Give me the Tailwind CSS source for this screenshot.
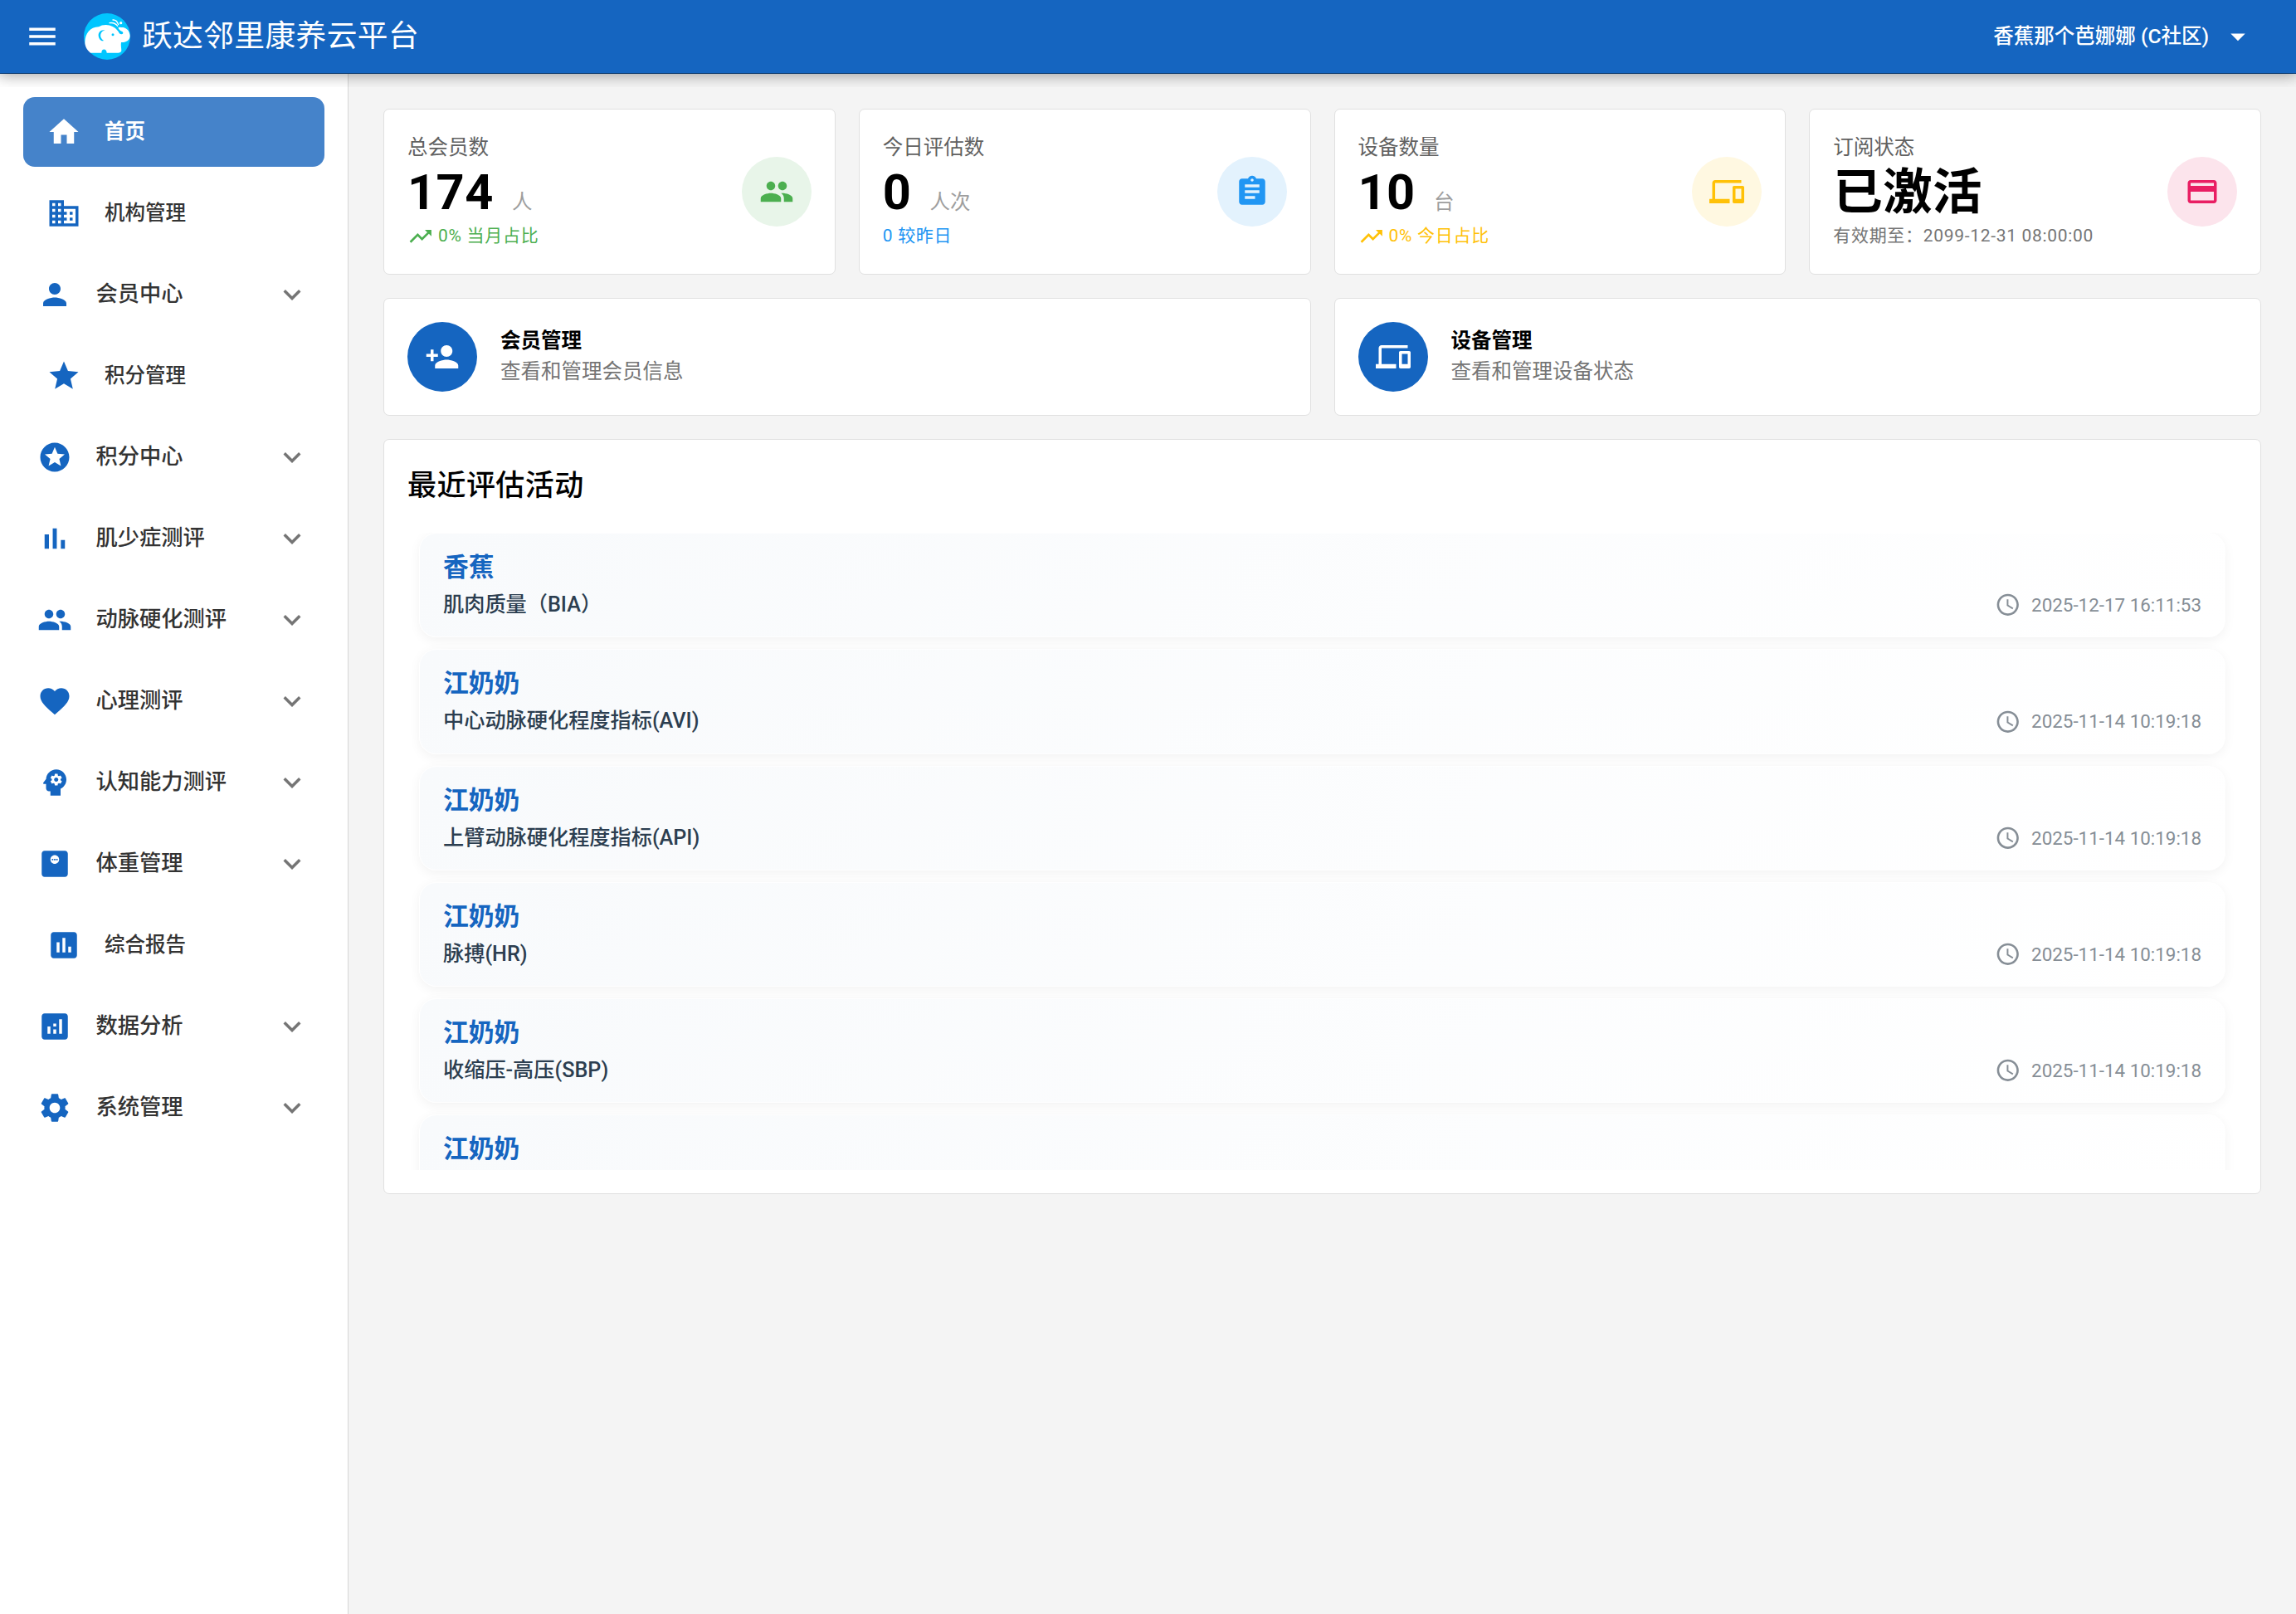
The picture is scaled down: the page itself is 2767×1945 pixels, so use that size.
<!DOCTYPE html>
<html lang="zh-CN">
<head>
  <meta charset="UTF-8" />
  <title>跃达邻里康养云平台</title>
  <script src="https://cdn.jsdelivr.net/npm/@tailwindcss/browser@4"></script>
  <style>
    body {
      font-family: Roboto, 'Noto Sans CJK SC', sans-serif;
    }
  </style>
</head>
<body class="h-[1945px] bg-[#f4f4f4] text-black overflow-hidden flex flex-col">

  <!-- Icon sprite -->
  <svg class="hidden" xmlns="http://www.w3.org/2000/svg">
    <symbol id="menu" viewBox="0 0 24 24"><path d="M3 18h18v-2H3v2zm0-5h18v-2H3v2zm0-7v2h18V6H3z"/></symbol>
    <symbol id="drop" viewBox="0 0 24 24"><path d="M7 10l5 5 5-5z"/></symbol>
    <symbol id="chevron" viewBox="0 0 24 24"><path d="M7.41 8.59L12 13.17l4.59-4.58L18 10l-6 6-6-6z"/></symbol>
    <symbol id="home" viewBox="0 0 24 24"><path d="M10 20v-6h4v6h5v-8h3L12 3 2 12h3v8z"/></symbol>
    <symbol id="business" viewBox="0 0 24 24"><path d="M12 7V3H2v18h20V7H12zM6 19H4v-2h2v2zm0-4H4v-2h2v2zm0-4H4V9h2v2zm0-4H4V5h2v2zm4 12H8v-2h2v2zm0-4H8v-2h2v2zm0-4H8V9h2v2zm0-4H8V5h2v2zm10 12h-8v-2h2v-2h-2v-2h2v-2h-2V9h8v10zm-2-8h-2v2h2v-2zm0 4h-2v2h2v-2z"/></symbol>
    <symbol id="person" viewBox="0 0 24 24"><path d="M12 12c2.21 0 4-1.79 4-4s-1.79-4-4-4-4 1.79-4 4 1.79 4 4 4zm0 2c-2.67 0-8 1.34-8 4v2h16v-2c0-2.66-5.33-4-8-4z"/></symbol>
    <symbol id="star" viewBox="0 0 24 24"><path d="M12 17.27L18.18 21l-1.64-7.03L22 9.24l-7.19-.61L12 2 9.19 8.63 2 9.24l5.46 4.73L5.82 21z"/></symbol>
    <symbol id="stars" viewBox="0 0 24 24"><path d="M11.99 2C6.47 2 2 6.48 2 12s4.47 10 9.99 10C17.52 22 22 17.52 22 12S17.52 2 11.99 2zm4.24 16L12 15.45 7.77 18l1.12-4.81-3.73-3.23 4.92-.42L12 5l1.92 4.53 4.92.42-3.73 3.23L16.23 18z"/></symbol>
    <symbol id="bar" viewBox="0 0 24 24"><path d="M5 9.2h3V19H5zM10.6 5h2.8v14h-2.8zm5.6 8H19v6h-2.8z"/></symbol>
    <symbol id="people" viewBox="0 0 24 24"><path d="M16 11c1.66 0 2.99-1.34 2.99-3S17.66 5 16 5c-1.66 0-3 1.34-3 3s1.34 3 3 3zm-8 0c1.66 0 2.99-1.34 2.99-3S9.66 5 8 5C6.34 5 5 6.34 5 8s1.34 3 3 3zm0 2c-2.33 0-7 1.17-7 3.5V19h14v-2.5c0-2.33-4.67-3.5-7-3.5zm8 0c-.29 0-.62.02-.97.05 1.16.84 1.97 1.97 1.97 3.45V19h6v-2.5c0-2.33-4.67-3.5-7-3.5z"/></symbol>
    <symbol id="heart" viewBox="0 0 24 24"><path d="M12 21.35l-1.45-1.32C5.4 15.36 2 12.28 2 8.5 2 5.42 4.42 3 7.5 3c1.74 0 3.41.81 4.5 2.09C13.09 3.81 14.76 3 16.5 3 19.58 3 22 5.42 22 8.5c0 3.78-3.4 6.86-8.55 11.54L12 21.35z"/></symbol>
    <symbol id="mind" viewBox="0 0 24 24"><path d="M13 8.57c-.79 0-1.43.64-1.43 1.43s.64 1.43 1.43 1.43 1.43-.64 1.43-1.43-.64-1.43-1.43-1.43z"/><path d="M13 3C9.25 3 6.2 5.94 6.02 9.64L4.1 12.2c-.25.33-.01.8.4.8H6v3c0 1.1.9 2 2 2h1v3h7v-4.68c2.36-1.12 4-3.53 4-6.32 0-3.87-3.13-7-7-7zm3 7c0 .13-.01.26-.02.39l.83.66c.08.06.1.16.05.25l-.8 1.39c-.05.09-.16.12-.24.09l-.99-.4c-.21.16-.43.29-.67.39L14 13.83c-.01.1-.1.17-.2.17h-1.6c-.1 0-.18-.07-.2-.17l-.15-1.06c-.25-.1-.47-.23-.68-.39l-.99.4c-.09.03-.2 0-.25-.09l-.8-1.39c-.05-.08-.03-.19.05-.25l.84-.66c-.01-.13-.02-.26-.02-.39s.02-.27.04-.39l-.85-.66c-.08-.06-.1-.16-.05-.26l.8-1.38c.05-.09.15-.12.24-.09l1 .4c.2-.15.43-.29.67-.39l.15-1.06c.02-.1.1-.17.2-.17h1.6c.1 0 .18.07.2.17l.15 1.06c.24.1.46.23.67.39l1-.4c.09-.03.2 0 .24.09l.8 1.38c.05.09.03.2-.05.26l-.85.66c.03.12.04.25.04.39z"/></symbol>
    <symbol id="weight" viewBox="0 0 24 24"><path d="M19 3H5c-1.1 0-2 .9-2 2v14c0 1.1.9 2 2 2h14c1.1 0 2-.9 2-2V5c0-1.1-.9-2-2-2zm-7 9c-1.66 0-3-1.34-3-3s1.34-3 3-3 3 1.34 3 3-1.34 3-3 3z"/><path d="M10 8.5h1v1h-1zM11.5 8.5h1v1h-1zM13 8.5h1v1h-1z"/></symbol>
    <symbol id="report" viewBox="0 0 24 24"><path d="M19 3H5c-1.1 0-2 .9-2 2v14c0 1.1.9 2 2 2h14c1.1 0 2-.9 2-2V5c0-1.1-.9-2-2-2zM9 17H7v-7h2v7zm4 0h-2V7h2v10zm4 0h-2v-4h2v4z"/></symbol>
    <symbol id="analytics" viewBox="0 0 24 24"><path d="M19 3H5c-1.1 0-2 .9-2 2v14c0 1.1.9 2 2 2h14c1.1 0 2-.9 2-2V5c0-1.1-.9-2-2-2zM9 17H7v-5h2v5zm4 0h-2v-3h2v3zm0-5h-2v-2h2v2zm4 5h-2V7h2v10z"/></symbol>
    <symbol id="settings" viewBox="0 0 24 24"><path d="M19.14 12.94c.04-.3.06-.61.06-.94 0-.32-.02-.64-.07-.94l2.03-1.58c.18-.14.23-.41.12-.61l-1.92-3.32c-.12-.22-.37-.29-.59-.22l-2.39.96c-.5-.38-1.03-.7-1.62-.94l-.36-2.54c-.04-.24-.24-.41-.48-.41h-3.84c-.24 0-.43.17-.47.41l-.36 2.54c-.59.24-1.13.57-1.62.94l-2.39-.96c-.22-.08-.47 0-.59.22L2.74 8.87c-.12.21-.08.47.12.61l2.03 1.58c-.05.3-.09.63-.09.94s.02.64.07.94l-2.03 1.58c-.18.14-.23.41-.12.61l1.92 3.32c.12.22.37.29.59.22l2.39-.96c.5.38 1.03.7 1.62.94l.36 2.54c.05.24.24.41.48.41h3.84c.24 0 .44-.17.47-.41l.36-2.54c.59-.24 1.13-.56 1.62-.94l2.39.96c.22.08.47 0 .59-.22l1.92-3.32c.12-.22.07-.47-.12-.61l-2.01-1.58zM12 15.6c-1.98 0-3.6-1.62-3.6-3.6s1.62-3.6 3.6-3.6 3.6 1.62 3.6 3.6-1.62 3.6-3.6 3.6z"/></symbol>
    <symbol id="trend" viewBox="0 0 24 24"><path d="M16 6l2.29 2.29-4.88 4.88-4-4L2 16.59 3.41 18l6-6 4 4 6.3-6.29L22 12V6z"/></symbol>
    <symbol id="assignment" viewBox="0 0 24 24"><path d="M19 3h-4.18C14.4 1.84 13.3 1 12 1c-1.3 0-2.4.84-2.82 2H5c-1.1 0-2 .9-2 2v14c0 1.1.9 2 2 2h14c1.1 0 2-.9 2-2V5c0-1.1-.9-2-2-2zm-7 0c.55 0 1 .45 1 1s-.45 1-1 1-1-.45-1-1 .45-1 1-1zm2 14H7v-2h7v2zm3-4H7v-2h10v2zm0-4H7V7h10v2z"/></symbol>
    <symbol id="devices" viewBox="0 0 24 24"><path d="M4 6h18V4H4c-1.1 0-2 .9-2 2v11H0v3h14v-3H4V6zm19 2h-6c-.55 0-1 .45-1 1v10c0 .55.45 1 1 1h6c.55 0 1-.45 1-1V9c0-.55-.45-1-1-1zm-1 9h-4v-7h4v7z"/></symbol>
    <symbol id="payment" viewBox="0 0 24 24"><path d="M20 4H4c-1.11 0-1.99.89-1.99 2L2 18c0 1.11.89 2 2 2h16c1.11 0 2-.89 2-2V6c0-1.11-.89-2-2-2zm0 14H4v-6h16v6zm0-10H4V6h16v2z"/></symbol>
    <symbol id="personadd" viewBox="0 0 24 24"><path d="M15 12c2.21 0 4-1.79 4-4s-1.79-4-4-4-4 1.79-4 4 1.79 4 4 4zm-9-2V7H4v3H1v2h3v3h2v-3h3v-2H6zm9 4c-2.67 0-8 1.34-8 4v2h16v-2c0-2.66-5.33-4-8-4z"/></symbol>
    <symbol id="clock" viewBox="0 0 24 24"><path d="M11.99 2C6.47 2 2 6.48 2 12s4.47 10 9.99 10C17.52 22 22 17.52 22 12S17.52 2 11.99 2zM12 20c-4.42 0-8-3.58-8-8s3.58-8 8-8 8 3.58 8 8-3.58 8-8 8z"/><path d="M12.5 7H11v6l5.25 3.15.75-1.23-4.5-2.67z"/></symbol>
  </svg>

  <!-- Header -->
  <header class="relative z-10 shrink-0 h-[89px] bg-[#1565c0] border-b border-[#114b8e] text-white flex items-center pl-[30px] pr-[49px]">
    <svg class="size-[42px] fill-current"><use href="#menu"/></svg>
    <svg class="size-14 ml-[29px]" viewBox="22 18 168 168">
      <circle cx="106" cy="102" r="84" fill="#00c6ff"/>
      <path fill="#fff" d="M26 122C27 92 44 68 76 67C88 58 112 57 126 66C136 70 142 78 147 84C149 90 153 94 158 94C164 94 166 89 162 85C156 82 148 78 146 70C152 66 158 70 164 69C178 71 188 84 189 99C189 115 176 124 157 123C155 134 158 146 158 154C157 159 152 161 146 161H105C105 144 85 144 86 161H46C34 150 26 138 26 122z"/>
      <path fill="#00c6ff" d="M99 79C82 76 74 88 75 99C76 112 86 121 94 117C84 110 81 103 83 94C85 86 91 81 99 79z"/>
      <circle cx="127" cy="95" r="4.500" fill="#00c6ff"/>
      <path fill="none" stroke="#fff" stroke-width="4" stroke-linecap="round" d="M115 53C127 51 138 56 144 64M127 42C137 41 144 50 147 59"/>
      <circle cx="156" cy="53" r="5" fill="#fff"/>
    </svg>
    <div class="ml-[14px] text-[36.75px] leading-[56px] tracking-[0.01em]">跃达邻里康养云平台</div>
    <div class="ml-auto flex items-center">
      <span class="text-[24.5px] leading-[42px] font-medium">香蕉那个芭娜娜 (C社区)</span>
      <svg class="size-[42px] ml-[14px] fill-current"><use href="#drop"/></svg>
    </div>
    <div class="absolute inset-x-0 top-[88px] h-[17px] overflow-hidden">
      <div class="absolute inset-x-0 -top-[88px] h-[88px] shadow-[0_0_17.5px_3.5px_rgba(0,0,0,0.2),0_0_17.5px_rgba(0,0,0,0.24)]"></div>
    </div>
  </header>

  <div class="flex flex-1 min-h-0">
    <!-- Sidebar -->
    <aside class="w-[420px] shrink-0 bg-white border-r border-[#d6d6d6] pt-7 pl-7 pr-7">
      <nav id="menuList" class="flex flex-col gap-[14px]"></nav>
    </aside>

    <main class="flex-1 p-[42px] flex flex-col gap-7">
      <!-- Stats -->
      <div class="grid grid-cols-4 gap-7">
        <div class="h-[200px] bg-white border border-[#e0e0e0] rounded-[7px] px-7 flex items-center justify-between">
          <div>
            <div class="text-[24.5px] leading-[35px] text-[#616161]">总会员数</div>
            <div class="h-[72px] text-[59.5px] leading-[75px] font-bold tracking-[0.0073em] whitespace-nowrap">174 <span class="ml-[7px] text-[24.5px] leading-none font-normal tracking-normal text-[#9e9e9e]">人</span></div>
            <div class="text-[21px] leading-[35px] tracking-[0.033em] text-[#4caf50] flex items-center"><svg class="size-[31.5px] mr-[5.6px] fill-current"><use href="#trend"/></svg>0% 当月占比</div>
          </div>
          <div class="size-[84px] rounded-full bg-[#e8f5e9] text-[#4caf50] flex items-center justify-center"><svg class="size-[42px] fill-current"><use href="#people"/></svg></div>
        </div>
        <div class="h-[200px] bg-white border border-[#e0e0e0] rounded-[7px] px-7 flex items-center justify-between">
          <div>
            <div class="text-[24.5px] leading-[35px] text-[#616161]">今日评估数</div>
            <div class="h-[72px] text-[59.5px] leading-[75px] font-bold tracking-[0.0073em] whitespace-nowrap">0 <span class="ml-[7px] text-[24.5px] leading-none font-normal tracking-normal text-[#9e9e9e]">人次</span></div>
            <div class="text-[21px] leading-[35px] tracking-[0.033em] text-[#2196f3]">0 较昨日</div>
          </div>
          <div class="size-[84px] rounded-full bg-[#e3f2fd] text-[#2196f3] flex items-center justify-center"><svg class="size-[42px] fill-current"><use href="#assignment"/></svg></div>
        </div>
        <div class="h-[200px] bg-white border border-[#e0e0e0] rounded-[7px] px-7 flex items-center justify-between">
          <div>
            <div class="text-[24.5px] leading-[35px] text-[#616161]">设备数量</div>
            <div class="h-[72px] text-[59.5px] leading-[75px] font-bold tracking-[0.0073em] whitespace-nowrap">10 <span class="ml-[7px] text-[24.5px] leading-none font-normal tracking-normal text-[#9e9e9e]">台</span></div>
            <div class="text-[21px] leading-[35px] tracking-[0.033em] text-[#ffc107] flex items-center"><svg class="size-[31.5px] mr-[5.6px] fill-current"><use href="#trend"/></svg>0% 今日占比</div>
          </div>
          <div class="size-[84px] rounded-full bg-[#fff8e1] text-[#ffc107] flex items-center justify-center"><svg class="size-[42px] fill-current"><use href="#devices"/></svg></div>
        </div>
        <div class="h-[200px] bg-white border border-[#e0e0e0] rounded-[7px] px-7 flex items-center justify-between">
          <div>
            <div class="text-[24.5px] leading-[35px] text-[#616161]">订阅状态</div>
            <div class="h-[72px] text-[59.5px] leading-[75px] font-bold tracking-[0.0073em] whitespace-nowrap">已激活</div>
            <div class="text-[21px] leading-[35px] tracking-[0.033em] text-[#757575]">有效期至：2099-12-31 08:00:00</div>
          </div>
          <div class="size-[84px] rounded-full bg-[#fce4ec] text-[#e91e63] flex items-center justify-center"><svg class="size-[42px] fill-current"><use href="#payment"/></svg></div>
        </div>
      </div>

      <!-- Quick links -->
      <div class="grid grid-cols-2 gap-7">
        <div class="h-[142px] bg-white border border-[#e0e0e0] rounded-[7px] px-7 flex items-center">
          <div class="size-[84px] rounded-full bg-[#1565c0] text-white flex items-center justify-center"><svg class="size-[42px] fill-current"><use href="#personadd"/></svg></div>
          <div class="ml-7 pb-[3px] text-[24.5px]">
            <div class="leading-[37px] font-bold">会员管理</div>
            <div class="leading-[37px] text-[#757575]">查看和管理会员信息</div>
          </div>
        </div>
        <div class="h-[142px] bg-white border border-[#e0e0e0] rounded-[7px] px-7 flex items-center">
          <div class="size-[84px] rounded-full bg-[#1565c0] text-white flex items-center justify-center"><svg class="size-[42px] fill-current"><use href="#devices"/></svg></div>
          <div class="ml-7 pb-[3px] text-[24.5px]">
            <div class="leading-[37px] font-bold">设备管理</div>
            <div class="leading-[37px] text-[#757575]">查看和管理设备状态</div>
          </div>
        </div>
      </div>

      <!-- Recent activity -->
      <div class="h-[910px] bg-white border border-[#e0e0e0] rounded-[7px] p-7">
        <h2 class="text-[35px] leading-[56px] font-medium tracking-[0.0125em]">最近评估活动</h2>
        <div id="activityList" class="mt-7 h-[768px] overflow-hidden px-[14px] flex flex-col gap-[14px]"></div>
      </div>
    </main>
  </div>

  <script>
    const menu = [
      ["home", "首页", "active"],
      ["business", "机构管理", "link"],
      ["person", "会员中心", "group"],
      ["star", "积分管理", "link"],
      ["stars", "积分中心", "group"],
      ["bar", "肌少症测评", "group"],
      ["people", "动脉硬化测评", "group"],
      ["heart", "心理测评", "group"],
      ["mind", "认知能力测评", "group"],
      ["weight", "体重管理", "group"],
      ["report", "综合报告", "link"],
      ["analytics", "数据分析", "group"],
      ["settings", "系统管理", "group"],
    ];
    const icon = (name, cls) => `<svg class="size-[42px] shrink-0 fill-current ${cls}"><use href="#${name}"/></svg>`;

    document.getElementById("menuList").innerHTML = menu.map(([name, label, type]) => {
      if (type === "active") {
        return `<a class="h-[84px] rounded-[14px] bg-[#4583ca] text-white flex items-center px-7">${icon(name, "")}<span class="ml-7 text-[24.5px] font-semibold">${label}</span></a>`;
      }
      if (type === "link") {
        return `<a class="h-[84px] flex items-center px-7 text-[#333]">${icon(name, "text-[#1565c0]")}<span class="ml-7 text-[24.5px] font-medium">${label}</span></a>`;
      }
      return `<a class="h-[84px] flex items-center pl-[17px] pr-[18px] text-[#333]">${icon(name, "text-[#1565c0]")}<span class="ml-[28.5px] text-[26.25px] font-medium">${label}</span>${icon("chevron", "ml-auto text-[#757575]")}</a>`;
    }).join("");

    const activities = [
      ["香蕉", "肌肉质量（BIA）", "2025-12-17 16:11:53"],
      ["江奶奶", "中心动脉硬化程度指标(AVI)", "2025-11-14 10:19:18"],
      ["江奶奶", "上臂动脉硬化程度指标(API)", "2025-11-14 10:19:18"],
      ["江奶奶", "脉搏(HR)", "2025-11-14 10:19:18"],
      ["江奶奶", "收缩压-高压(SBP)", "2025-11-14 10:19:18"],
      ["江奶奶"],
    ];
    const detail = (item, time) => `
        <div class="flex items-center justify-between h-[46px] mt-px">
          <span class="text-[25.2px] leading-[46px] font-medium text-[#2c3e50]">${item}</span>
          <span class="flex items-center text-[22.4px] leading-[46px] text-[#868e96]"><svg class="size-[31.5px] mr-[12.5px] fill-current"><use href="#clock"/></svg>${time}</span>
        </div>`;
    document.getElementById("activityList").innerHTML = activities.map(([name, item, time]) => `
      <div class="h-[126.25px] shrink-0 rounded-[21px] border border-white/80 bg-linear-135 from-[#f8fafc] to-white shadow-[0_3.5px_14px_rgba(0,0,0,0.05)] px-7 pt-[19px]">
        <div class="text-[30.8px] leading-[43px] font-bold text-[#1565c0]">${name}</div>${item ? detail(item, time) : ""}
      </div>`).join("");
  </script>
</body>
</html>
